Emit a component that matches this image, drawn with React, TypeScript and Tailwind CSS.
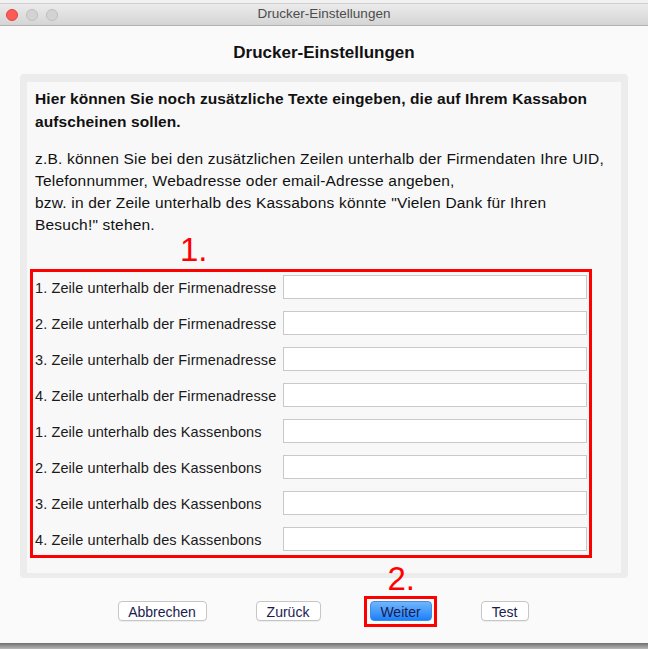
import React from "react";

const rows = [
  "1. Zeile unterhalb der Firmenadresse",
  "2. Zeile unterhalb der Firmenadresse",
  "3. Zeile unterhalb der Firmenadresse",
  "4. Zeile unterhalb der Firmenadresse",
  "1. Zeile unterhalb des Kassenbons",
  "2. Zeile unterhalb des Kassenbons",
  "3. Zeile unterhalb des Kassenbons",
  "4. Zeile unterhalb des Kassenbons",
];

function Light({ color, border }: { color: string; border: string }) {
  return <span className={`block w-[12px] h-[12px] rounded-full border ${color} ${border}`} />;
}

export default function App() {
  return (
    <div
      className="relative w-[648px] h-[649px] overflow-hidden bg-[#ededed] flex flex-col"
      style={{ fontFamily: '"Liberation Sans", Arial, sans-serif' }}
    >
      <div className="h-[3px] bg-[#f2f2f2]" />

      {/* title bar */}
      <div className="relative h-[23px] flex items-center border-t border-t-[#cfcfcf] border-b border-b-[#b1b1b1] bg-gradient-to-b from-[#ebebeb] to-[#d5d5d5]">
        <div className="flex items-center gap-[8px] pl-[6px]">
          <Light color="bg-[#fc5b57]" border="border-[#e0443e]" />
          <Light color="bg-[#d3d3d3]" border="border-[#bebebe]" />
          <Light color="bg-[#d3d3d3]" border="border-[#bebebe]" />
        </div>
        <div className="absolute inset-0 flex items-center justify-center text-[13.5px] text-[#4d4d4d]">
          Drucker-Einstellungen
        </div>
      </div>

      {/* body */}
      <div className="flex-1 bg-[#fafafa] flex flex-col pt-[17px]">
        <h1 className="h-[20px] leading-[20px] text-center text-[17px] font-bold text-[#111]">
          Drucker-Einstellungen
        </h1>

        <div className="mt-[11px] mx-[20px] rounded-[4px] bg-[#ececec] pt-[8px] px-[7px] pb-[5px]">
          <div className="relative h-[491px] bg-[#f8f8f8] pt-[5px]">
            <div className="px-[8px] text-[#111] whitespace-nowrap">
              <p className="text-[15.5px] tracking-[0.1px] leading-[23px] font-bold">
                Hier können Sie noch zusätzliche Texte eingeben, die auf Ihrem Kassabon
                <br />
                aufscheinen sollen.
              </p>
              <p className="mt-[15px] text-[15.5px] tracking-[0.2px] leading-[22px]">
                z.B. können Sie bei den zusätzlichen Zeilen unterhalb der Firmendaten Ihre UID,
                <br />
                Telefonnummer, Webadresse oder email-Adresse angeben,
                <br />
                bzw. in der Zeile unterhalb des Kassabons könnte "Vielen Dank für Ihren
                <br />
                Besuch!" stehen.
              </p>
            </div>

            <span className="absolute left-[153px] top-[152px] text-[33px] leading-[32px] text-[#ff0000]">1.</span>

            <div className="mt-[33px] ml-[3px] w-[562px] border-[3px] border-[#ff0000] pt-[3px] pb-[4px] pr-[2px] flex flex-col gap-[12px]">
              {rows.map((r) => (
                <div key={r} className="flex items-center h-[24px]">
                  <span className="w-[250px] pl-[2px] pt-[4px] text-[14.5px] tracking-[0.1px] text-[#1a1a1a] whitespace-nowrap">
                    {r}
                  </span>
                  <div className="flex-1 h-[24px] bg-white border border-[#c9c9c9]" />
                </div>
              ))}
            </div>
          </div>
        </div>

        {/* buttons */}
        <div className="mt-[23px] flex justify-center gap-[49px] pr-[2px] text-[14px] text-[#1b1b50]">
          <button className="w-[89px] h-[20px] bg-white border border-[#c6c6c6] rounded-[4px] shadow-[0_1px_0_rgba(0,0,0,0.05)]">
            Abbrechen
          </button>
          <button className="w-[65px] h-[20px] bg-white border border-[#c6c6c6] rounded-[4px] shadow-[0_1px_0_rgba(0,0,0,0.05)]">
            Zurück
          </button>
          <div className="relative">
            <span className="absolute left-[18px] top-[-38px] text-[33px] leading-[32px] text-[#ff0000]">2.</span>
            <div className="absolute left-[-6px] top-[-5px] w-[73px] h-[31px] border-[3px] border-[#ff0000]" />
            <button className="relative w-[62px] h-[20px] rounded-[4px] border border-[#3b8fe8] bg-gradient-to-b from-[#6fb5fb] to-[#1580fb]">
              Weiter
            </button>
          </div>
          <button className="w-[48px] h-[20px] bg-white border border-[#c6c6c6] rounded-[4px] shadow-[0_1px_0_rgba(0,0,0,0.05)]">
            Test
          </button>
        </div>
      </div>

      <div className="h-[6px] bg-gradient-to-b from-[#6f6f6f] to-[#b9b9b9]" />
    </div>
  );
}
